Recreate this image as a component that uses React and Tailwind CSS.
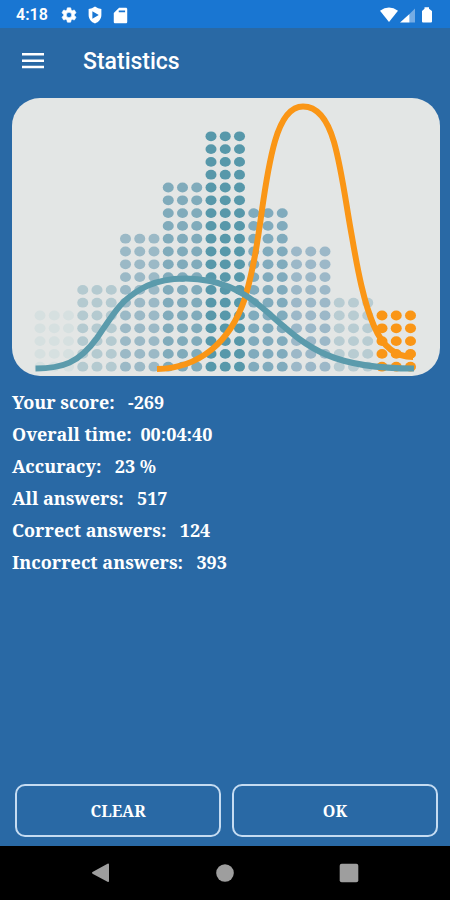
const DOT_GROUPS = [
  { rows: 5, color: "#d6e0e0" },
  { rows: 7, color: "#b4cad0" },
  { rows: 11, color: "#9bb9c6" },
  { rows: 15, color: "#80abbb" },
  { rows: 19, color: "#5798aa" },
  { rows: 13, color: "#80abbd" },
  { rows: 10, color: "#9cb8c8" },
  { rows: 6, color: "#b8ccd2" },
  { rows: 5, color: "#fa9616" },
];

const STATS = [
  { label: "Your score:", value: "  -269" },
  { label: "Overall time:", value: " 00:04:40" },
  { label: "Accuracy:", value: "  23 %" },
  { label: "All answers:", value: "  517" },
  { label: "Correct answers:", value: "  124" },
  { label: "Incorrect answers:", value: "  393" },
];

function StatusBar() {
  return (
    <div className="flex h-7 items-center justify-between bg-[#1976d2] px-4 pt-0.5 text-white">
      <div className="flex items-center gap-2">
        <span className="mr-1 font-['Roboto',sans-serif] text-base font-semibold">4:18</span>
        <svg className="size-[18px]" viewBox="0 0 24 24" fill="currentColor" aria-hidden="true">
          <path
            stroke="currentColor"
            strokeWidth=".8"
            d="M19.14 12.94c.04-.3.06-.61.06-.94s-.02-.64-.07-.94l2.03-1.58a.49.49 0 0 0 .12-.61l-1.92-3.32a.49.49 0 0 0-.59-.22l-2.39.96a7 7 0 0 0-1.62-.94l-.36-2.54a.48.48 0 0 0-.48-.41h-3.84a.47.47 0 0 0-.47.41l-.36 2.54c-.59.24-1.13.57-1.62.94l-2.39-.96a.48.48 0 0 0-.59.22L2.74 8.87a.47.47 0 0 0 .12.61l2.03 1.58a7 7 0 0 0 0 1.88l-2.03 1.58a.49.49 0 0 0-.12.61l1.92 3.32c.12.22.37.29.59.22l2.39-.96c.5.38 1.03.7 1.62.94l.36 2.54c.05.24.24.41.48.41h3.84c.24 0 .44-.17.47-.41l.36-2.54a7 7 0 0 0 1.62-.94l2.39.96c.22.08.47 0 .59-.22l1.92-3.32a.47.47 0 0 0-.12-.61zM12 15.6a3.6 3.6 0 1 1 0-7.2 3.6 3.6 0 0 1 0 7.2z"
          />
        </svg>
        <svg className="size-[18px]" viewBox="0 0 24 24" fill="currentColor" fillRule="evenodd" aria-hidden="true">
          <path d="M12 .8Q16 4 20.500 4V12c0 5.300-3.500 9.600-8.500 11.200-5-1.600-8.500-5.900-8.500-11.200V4Q8 4 12 .8zM8.500 7v10l8.500-5z" />
        </svg>
        <svg className="size-[17px]" viewBox="0 0 24 24" fill="currentColor" fillRule="evenodd" aria-hidden="true">
          <path d="M19.500 1H10L2.500 8.500V21c0 1.100.9 2 2 2h15c1.100 0 2-.9 2-2V3c0-1.100-.9-2-2-2zM18.500 7.500h-9V5h9z" />
        </svg>
      </div>
      <svg className="h-4 w-[54px]" viewBox="0 0 54 16" fill="currentColor" aria-hidden="true">
        <path d="M0 3.800Q9-2.800 18 3.800L9 15z" />
        <path d="M35 1.500V15.500H29.500V7z" fillOpacity=".4" />
        <path d="M29.500 7V15.500H20z" />
        <path d="M44.500 1.800V.3h4.500V1.800L52 4V14.500a1 1 0 0 1-1 1H43a1 1 0 0 1-1-1V4z" />
      </svg>
    </div>
  );
}

function DistributionChart() {
  return (
    <svg
      className="block w-full rounded-[28px] bg-[#e3e6e5]"
      viewBox="12 98 428 278"
      role="img"
      aria-label="Score distribution"
    >
      {DOT_GROUPS.map((group, g) =>
        [0, 1, 2].map((c) =>
          Array.from({ length: group.rows }, (_, r) => (
            <ellipse
              key={`${g}-${c}-${r}`}
              cx={40 + (g * 3 + c) * 14.25}
              cy={366.7 - r * 12.8}
              rx="5.5"
              ry="4.900"
              fill={group.color}
            />
          ))
        )
      )}
      <path
        d="M157 369C199 368 230 343 245 298C262 240 261 190 275 141C282 117 291 106.500 303 106.500C317 106.500 327 118 334 142C342 170 346 205 352 237C358 272 364 303 374 326C382 345 394 357 413 357"
        fill="none"
        stroke="#fa9616"
        strokeWidth="6"
      />
      <path
        d="M35.500 368.500C62 368.500 79 363 97 338C114 313 120 301 141 289C160 278 187 276 210 281C239 287 256 302 274 318C309 349 333 368.500 414 368.500"
        fill="none"
        stroke="#5b9bac"
        strokeWidth="6"
      />
    </svg>
  );
}

export default function App() {
  return (
    <div className="flex min-h-screen flex-col bg-[#2969a5] text-white">
      <StatusBar />
      <header className="flex h-[70px] items-center gap-[39px] pl-[22px] pb-1">
        <button type="button" aria-label="Open menu">
          <svg className="block h-4 w-[22px]" viewBox="0 0 22 16" fill="currentColor" aria-hidden="true">
            <path d="M0 0h22v2.500H0zM0 6.400h22v2.500H0zM0 12.800h22v2.500H0z" />
          </svg>
        </button>
        <h1 className="pt-0.5 font-['Roboto',sans-serif] text-[23px] font-medium leading-7">Statistics</h1>
      </header>
      <main className="flex flex-1 flex-col pb-[9px] pl-3 pr-2.5 font-['Noto_Serif','DejaVu_Serif_Condensed','DejaVu_Serif',serif] font-bold">
        <DistributionChart />
        <dl className="mt-2.5 mr-auto text-lg leading-8">
          {STATS.map((stat) => (
            <div key={stat.label} className="flex gap-1 whitespace-pre">
              <dt>{stat.label}</dt>
              <dd>{stat.value}</dd>
            </div>
          ))}
        </dl>
        <div className="mt-auto grid grid-cols-2 gap-[11px] pl-[3px] pr-0.5 text-base">
          <button type="button" className="h-[53px] rounded-[10px] border-2 border-[#c5dcf2]">CLEAR</button>
          <button type="button" className="h-[53px] rounded-[10px] border-2 border-[#c5dcf2]">OK</button>
        </div>
      </main>
      <nav className="flex h-[54px] items-center justify-center gap-[104px] bg-black text-[#9e9e9e]">
        <button type="button" aria-label="Back">
          <svg className="block size-5" viewBox="0 0 20 20" fill="currentColor" aria-hidden="true">
            <path d="M18 1.500V18a1 1 0 0 1-1.500.8L1.500 10.700a1 1 0 0 1 0-1.600L16.500 .8a1 1 0 0 1 1.500.7z" />
          </svg>
        </button>
        <button type="button" aria-label="Home">
          <svg className="block size-5" viewBox="0 0 20 20" fill="currentColor" aria-hidden="true">
            <circle cx="10" cy="10" r="8.800" />
          </svg>
        </button>
        <button type="button" aria-label="Recent apps">
          <svg className="block size-5" viewBox="0 0 20 20" fill="currentColor" aria-hidden="true">
            <rect x=".7" y=".7" width="18.600" height="18.600" rx="2" />
          </svg>
        </button>
      </nav>
    </div>
  );
}
